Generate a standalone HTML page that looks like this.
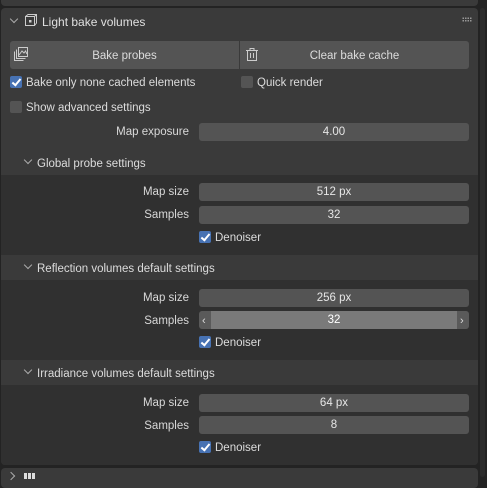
<!DOCTYPE html><html><head><style>
body{margin:0;width:487px;height:477px;background:#232323;font-family:"Liberation Sans",sans-serif;font-size:11.5px;color:#dcdcdc;position:relative;overflow:hidden}
.a{position:absolute}
.t{margin-top:2px}
.pan{background:#3a3a3a;border-radius:4px}
.sub{background:#303030}
.fld{position:absolute;left:199px;width:270px;height:18px;background:#545454;border-radius:3px;text-align:center;line-height:19px;color:#e6e6e6}
.lbl{position:absolute;right:298px;text-align:right;color:#d8d8d8;margin-top:2px}
.cb{position:absolute;width:12px;height:12px;border-radius:2px;background:#545454}
.cb.on{background:#4772b3}
.cb.on:after{content:"";position:absolute;left:4px;top:1px;width:3px;height:7px;border:solid #fff;border-width:0 2px 2px 0;transform:rotate(40deg)}
.chev{position:absolute;width:5px;height:5px;border:solid #aaa;border-width:0 1px 1px 0;transform:rotate(45deg)}
</style></head><body>
<div class="a pan" style="left:1px;top:-6px;width:477px;height:12px"></div>
<div class="a" style="left:480px;top:8px;width:5px;height:469px;background:#2c2c2c;border-radius:3px"></div>
<div class="a pan" style="left:1px;top:8px;width:477px;height:457px"></div>
<div class="chev" style="left:11px;top:16px"></div>
<svg class="a" style="left:24px;top:13px" width="14" height="14" viewBox="0 0 14 14" fill="none" stroke="#ccc" stroke-width="1"><rect x="1.5" y="3.5" width="9" height="9"/><path d="M1.5 3.5L4 1.5H12.5V10L10.5 12.5M10.5 3.5L12.5 1.5"/><rect x="5.5" y="7.5" width="1.5" height="1.5" fill="#ccc"/></svg>
<div class="a t" style="left:42px;top:13px;font-size:12px;color:#e0e0e0">Light bake volumes</div>
<div class="a" style="left:462px;top:17px;width:10px;height:5px;background:radial-gradient(circle,#999 0.7px,transparent 1px) 0 0/2.5px 2.5px"></div>
<div class="a" style="left:10px;top:41px;width:229px;height:28px;background:#545454;border-radius:3px 0 0 3px"></div>
<div class="a" style="left:240px;top:41px;width:229px;height:28px;background:#545454;border-radius:0 3px 3px 0"></div>
<svg class="a" style="left:13px;top:46px" width="16" height="16" viewBox="0 0 16 16" fill="none" stroke="#ccc"><rect x="5.5" y="1.5" width="9" height="9"/><path d="M3.5 3.5V12.5H12.5M1.5 5.5V14.5H10.5M6 9l3-4 2 2 1.5-2 1.5 3"/></svg>
<svg class="a" style="left:245px;top:47px" width="14" height="15" viewBox="0 0 14 15" fill="none" stroke="#ccc"><path d="M1 3.5H13M5 3.5V1.5H9V3.5M2.5 3.5V13.5H11.5V3.5M5.5 6V11M8.5 6V11"/></svg>
<div class="a t" style="left:10px;top:48px;width:229px;text-align:center">Bake probes</div>
<div class="a t" style="left:240px;top:48px;width:229px;text-align:center">Clear bake cache</div>
<div class="cb on" style="left:10px;top:76px"></div><div class="a t" style="left:26px;top:75px">Bake only none cached elements</div>
<div class="cb" style="left:241px;top:76px"></div><div class="a t" style="left:257px;top:75px">Quick render</div>
<div class="cb" style="left:10px;top:101px"></div><div class="a t" style="left:26px;top:100px">Show advanced settings</div>
<div class="lbl" style="top:124px">Map exposure</div><div class="fld" style="top:123px">4.00</div>

<div class="chev" style="left:25px;top:157px"></div><div class="a t" style="left:37px;top:156px">Global probe settings</div>
<div class="a sub" style="left:1px;top:175px;width:477px;height:80px"></div>
<div class="lbl" style="top:184px">Map size</div><div class="fld" style="top:183px">512 px</div>
<div class="lbl" style="top:207px">Samples</div><div class="fld" style="top:206px">32</div>
<div class="cb on" style="left:199px;top:231px"></div><div class="a t" style="left:215px;top:230px">Denoiser</div>

<div class="chev" style="left:25px;top:262px"></div><div class="a t" style="left:37px;top:261px">Reflection volumes default settings</div>
<div class="a sub" style="left:1px;top:280px;width:477px;height:80px"></div>
<div class="lbl" style="top:290px">Map size</div><div class="fld" style="top:289px">256 px</div>
<div class="lbl" style="top:313px">Samples</div><div class="fld" style="top:311px;background:linear-gradient(90deg,#5a5a5a 12px,#7a7a7a 12px,#7a7a7a 258px,#5a5a5a 258px);color:#fff">32</div>
<div class="a t" style="left:202px;top:313px;font-size:11px;color:#ddd">‹</div><div class="a t" style="left:460px;top:313px;font-size:11px;color:#ddd">›</div>
<div class="cb on" style="left:199px;top:336px"></div><div class="a t" style="left:215px;top:335px">Denoiser</div>

<div class="chev" style="left:25px;top:367px"></div><div class="a t" style="left:37px;top:366px">Irradiance volumes default settings</div>
<div class="a sub" style="left:1px;top:385px;width:477px;height:80px;border-radius:0 0 4px 4px"></div>
<div class="lbl" style="top:395px">Map size</div><div class="fld" style="top:394px">64 px</div>
<div class="lbl" style="top:418px">Samples</div><div class="fld" style="top:416px">8</div>
<div class="cb on" style="left:199px;top:441px"></div><div class="a t" style="left:215px;top:440px">Denoiser</div>

<div class="a pan" style="left:1px;top:468px;width:477px;height:20px"></div>
<div class="chev" style="left:8px;top:473px;transform:rotate(-45deg)"></div>
<div class="a" style="left:24px;top:473px;width:12px;height:6px;background:repeating-linear-gradient(90deg,#ddd 0 3px,#3a3a3a 3px 4px)"></div>
</body></html>
